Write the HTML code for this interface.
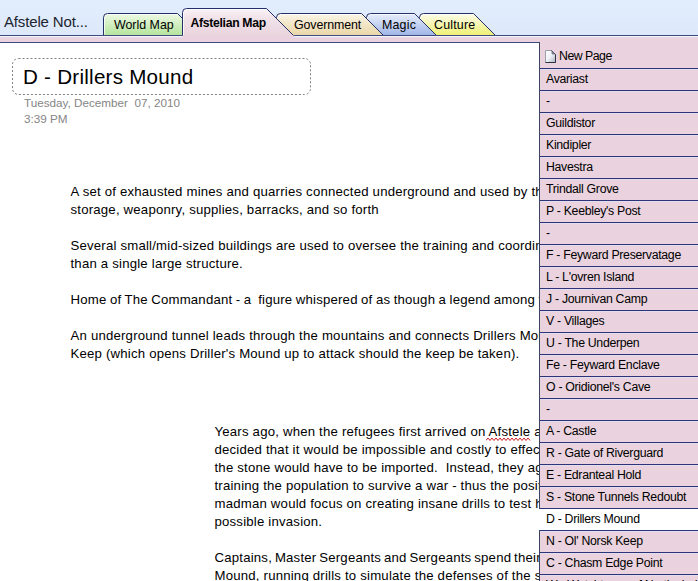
<!DOCTYPE html>
<html><head><meta charset="utf-8">
<style>
*{margin:0;padding:0;box-sizing:border-box}
html,body{width:698px;height:581px;overflow:hidden;background:#fff;font-family:"Liberation Sans",sans-serif}
.abs{position:absolute}
#strip{left:0;top:0;width:698px;height:43px}
.nb{position:absolute;left:4px;top:13px;font-size:15px;letter-spacing:-0.15px;color:#20242e;white-space:pre;line-height:18px}
.tl{position:absolute;font-size:12px;color:#000;white-space:pre;line-height:14px}
#content{left:0;top:43px;width:539px;height:538px;background:#fff;overflow:hidden}
.para{position:absolute;font-size:13.2px;letter-spacing:0.2px;line-height:18px;color:#000;white-space:pre}
#list{left:539px;top:42px;width:159px;height:539px;background:#ead3de;border-left:1px solid #3c4262}
.row{position:absolute;left:0;width:159px;height:22px;line-height:22px;font-size:12.3px;letter-spacing:-0.3px;color:#000;padding-left:6px;white-space:pre;
 background:linear-gradient(#2b3578 0,#2b3578 1px,#e6dcf0 1px,#e6dcf0 2px,#ead3de 2px)}
.sel{background:linear-gradient(#2b3578 0,#2b3578 1px,#fff 1px)}
</style></head><body>
<svg id="strip" class="abs" width="698" height="43" viewBox="0 0 698 43">
 <defs>
  <linearGradient id="gbg" x1="0" y1="0" x2="0" y2="1"><stop offset="0" stop-color="#e2edfc"/><stop offset="1" stop-color="#dde9fb"/></linearGradient>
  <linearGradient id="gg" x1="0" y1="0" x2="0" y2="1"><stop offset="0" stop-color="#eefae6"/><stop offset="0.3" stop-color="#ddf3cf"/><stop offset="1" stop-color="#b2e39a"/></linearGradient>
  <linearGradient id="gp" x1="0" y1="0" x2="0" y2="1"><stop offset="0" stop-color="#faf4f7"/><stop offset="0.35" stop-color="#f0e2e9"/><stop offset="1" stop-color="#ead3de"/></linearGradient>
  <linearGradient id="gt" x1="0" y1="0" x2="0" y2="1"><stop offset="0" stop-color="#fbf7ea"/><stop offset="0.3" stop-color="#f5ebd2"/><stop offset="1" stop-color="#e9d6a6"/></linearGradient>
  <linearGradient id="gb" x1="0" y1="0" x2="0" y2="1"><stop offset="0" stop-color="#e6ecfa"/><stop offset="0.3" stop-color="#d3def6"/><stop offset="1" stop-color="#9cb3e7"/></linearGradient>
  <linearGradient id="gy" x1="0" y1="0" x2="0" y2="1"><stop offset="0" stop-color="#fcfce8"/><stop offset="0.3" stop-color="#f8f8c8"/><stop offset="1" stop-color="#eeee70"/></linearGradient>
 </defs>
 <rect x="0" y="0" width="698" height="35" fill="url(#gbg)"/>
 <rect x="0" y="36" width="698" height="1" fill="#f6f2f6"/>
 <rect x="0" y="37" width="698" height="5" fill="#ead3de"/><rect x="0" y="37" width="698" height="1" fill="#e6d8ea"/>
 <rect x="0" y="42" width="540" height="1" fill="#3a4a7e"/>
 <path d="M419.5 36 V17.5 Q419.5 13.5 423.5 13.5 H473.5 L495.5 36 Z" fill="url(#gy)"/><path d="M420.5 34.5 V17.5 Q420.5 14.5 423.5 14.5 H473.0" fill="none" stroke="#ffffff" stroke-opacity="0.75" stroke-width="1"/><path d="M419.5 35.5 V17.5 Q419.5 13.5 423.5 13.5 H473.5 L495.5 35.5" fill="none" stroke="#24306a" stroke-width="1"/>
 <path d="M366.5 36 V17.5 Q366.5 13.5 370.5 13.5 H414.5 L436.5 36 Z" fill="url(#gb)"/><path d="M367.5 34.5 V17.5 Q367.5 14.5 370.5 14.5 H414.0" fill="none" stroke="#ffffff" stroke-opacity="0.75" stroke-width="1"/><path d="M366.5 35.5 V17.5 Q366.5 13.5 370.5 13.5 H414.5 L436.5 35.5" fill="none" stroke="#24306a" stroke-width="1"/>
 <path d="M276.5 36 V17.5 Q276.5 13.5 280.5 13.5 H361.5 L383.5 36 Z" fill="url(#gt)"/><path d="M277.5 34.5 V17.5 Q277.5 14.5 280.5 14.5 H361.0" fill="none" stroke="#ffffff" stroke-opacity="0.75" stroke-width="1"/><path d="M276.5 35.5 V17.5 Q276.5 13.5 280.5 13.5 H361.5 L383.5 35.5" fill="none" stroke="#24306a" stroke-width="1"/>
 <path d="M103.5 36 V17.5 Q103.5 13.5 107.5 13.5 H177.5 L199.5 36 Z" fill="url(#gg)"/><path d="M104.5 34.5 V17.5 Q104.5 14.5 107.5 14.5 H177.0" fill="none" stroke="#ffffff" stroke-opacity="0.75" stroke-width="1"/><path d="M103.5 35.5 V17.5 Q103.5 13.5 107.5 13.5 H177.5 L199.5 35.5" fill="none" stroke="#24306a" stroke-width="1"/>
 <rect x="0" y="35" width="698" height="1" fill="#3c4c80"/>
 <path d="M182.5 37 V12.5 Q182.5 8.5 186.5 8.5 H266.5 L294.5 36 V37 Z" fill="url(#gp)"/><path d="M183.5 37 V12.5 Q183.5 9.5 186.5 9.5 H266.0" fill="none" stroke="#ffffff" stroke-opacity="0.8" stroke-width="1"/><path d="M182.5 35.5 V12.5 Q182.5 8.5 186.5 8.5 H266.5 L293.5 35.5" fill="none" stroke="#24306a" stroke-width="1"/>
 <rect x="183" y="35" width="110" height="3" fill="#ead3de"/>
</svg>
<div class="nb">Afstele Not...</div>
<div class="tl" style="left:114px;top:18px;font-size:12.4px">World Map</div>
<div class="tl" style="left:190.5px;top:16px;font-weight:bold;font-size:12.2px;letter-spacing:-0.3px;color:#000">Afstelian Map</div>
<div class="tl" style="left:294px;top:18px;font-size:12.4px;letter-spacing:-0.1px">Government</div>
<div class="tl" style="left:382px;top:18px;font-size:12.4px;letter-spacing:0.2px">Magic</div>
<div class="tl" style="left:434px;top:18px;font-size:12.4px;letter-spacing:0.2px">Culture</div>

<div id="content" class="abs">
 <svg class="abs" style="left:0;top:0" width="539" height="120">
  <rect x="12.5" y="15.5" width="298" height="36" rx="6" ry="6" fill="none" stroke="#808080" stroke-width="1" stroke-dasharray="2 2"/>
 </svg>
 <div class="abs" style="left:23px;top:22px;font-size:20.6px;letter-spacing:0.25px;line-height:24px;color:#000;white-space:pre">D - Drillers Mound</div>
 <div class="abs" style="left:24px;top:52px;font-size:11.7px;line-height:16px;color:#858585;white-space:pre">Tuesday, December  07, 2010
3:39 PM</div>
 <div class="para" style="left:70.5px;top:140px">A set of exhausted mines and quarries connected underground and used by the Drillers for
storage, weaponry, supplies, barracks, and so forth

Several small/mid-sized buildings are used to oversee the training and coordination of troops rather
than a single large structure.

<span style="word-spacing:-0.45px">Home of The Commandant - a  figure whispered of as though a legend among the soldiers</span>
 
An underground tunnel leads through the mountains and connects Drillers Mound to Ol' Norsk
Keep (which opens Driller's Mound up to attack should the keep be taken).</div>
 <div class="para" style="left:214.5px;top:380px">Years ago, when the refugees first arrived on Afstele and
decided that it would be impossible and costly to effect
the stone would have to be imported.  Instead, they agreed
training the population to survive a war - thus the position
madman would focus on creating insane drills to test his
possible invasion.

<span style="word-spacing:-1px">Captains, Master Sergeants and Sergeants spend their time</span>
Mound, running drills to simulate the defenses of the state</div>
<svg class="abs" style="left:486px;top:393.5px" width="46" height="5"><path d="M0 3.5 L2 1 L4 3.5 L6 1 L8 3.5 L10 1 L12 3.5 L14 1 L16 3.5 L18 1 L20 3.5 L22 1 L24 3.5 L26 1 L28 3.5 L30 1 L32 3.5 L34 1 L36 3.5 L38 1 L40 3.5 L42 1 L44 3.5" fill="none" stroke="#cc1f2a" stroke-width="1"/></svg>
</div>

<div id="list" class="abs">
 <div class="row" style="top:1px;height:26px;line-height:26px;background:none;padding-left:19px;letter-spacing:-0.5px">New Page</div>
 <svg class="abs" style="left:5px;top:8px" width="12" height="14" viewBox="0 0 12 14">
  <defs><linearGradient id="pg" x1="0" y1="0" x2="1" y2="1"><stop offset="0" stop-color="#ffffff"/><stop offset="0.5" stop-color="#eef1f5"/><stop offset="1" stop-color="#aab2c0"/></linearGradient></defs>
  <path d="M0.5 0.5 H6.5 L10.5 4.5 V12.5 H0.5 Z" fill="url(#pg)" stroke="#9a9eaa" stroke-width="1"/>
  <path d="M6.5 0.5 L10.5 4.5 V12.5 H0.5" fill="none" stroke="#2e3240" stroke-width="1"/>
  <path d="M6.5 0.5 V3 Q6.5 4.5 8 4.5 H10.5 Z" fill="#7a8090" stroke="none"/>
 </svg>
 <div class="row" style="top:26px">Avariast</div>
 <div class="row" style="top:48px">-</div>
 <div class="row" style="top:70px">Guildistor</div>
 <div class="row" style="top:92px">Kindipler</div>
 <div class="row" style="top:114px">Havestra</div>
 <div class="row" style="top:136px">Trindall Grove</div>
 <div class="row" style="top:158px">P - Keebley's Post</div>
 <div class="row" style="top:180px">-</div>
 <div class="row" style="top:202px">F - Feyward Preservatage</div>
 <div class="row" style="top:224px">L - L'ovren Island</div>
 <div class="row" style="top:246px">J - Journivan Camp</div>
 <div class="row" style="top:268px">V - Villages</div>
 <div class="row" style="top:290px">U - The Underpen</div>
 <div class="row" style="top:312px">Fe - Feyward Enclave</div>
 <div class="row" style="top:334px">O - Oridionel's Cave</div>
 <div class="row" style="top:356px">-</div>
 <div class="row" style="top:378px">A - Castle</div>
 <div class="row" style="top:400px">R - Gate of Riverguard</div>
 <div class="row" style="top:422px">E - Edranteal Hold</div>
 <div class="row" style="top:444px">S - Stone Tunnels Redoubt</div>
 <div class="row sel" style="top:466px">D - Drillers Mound</div>
 <div class="abs" style="left:-1px;top:467px;width:1px;height:21px;background:#fff"></div>
 <div class="row" style="top:488px">N - Ol' Norsk Keep</div>
 <div class="row" style="top:510px">C - Chasm Edge Point</div>
 <div class="row" style="top:532px">W - Watchtower of Northwind</div>
</div>
</body></html>
